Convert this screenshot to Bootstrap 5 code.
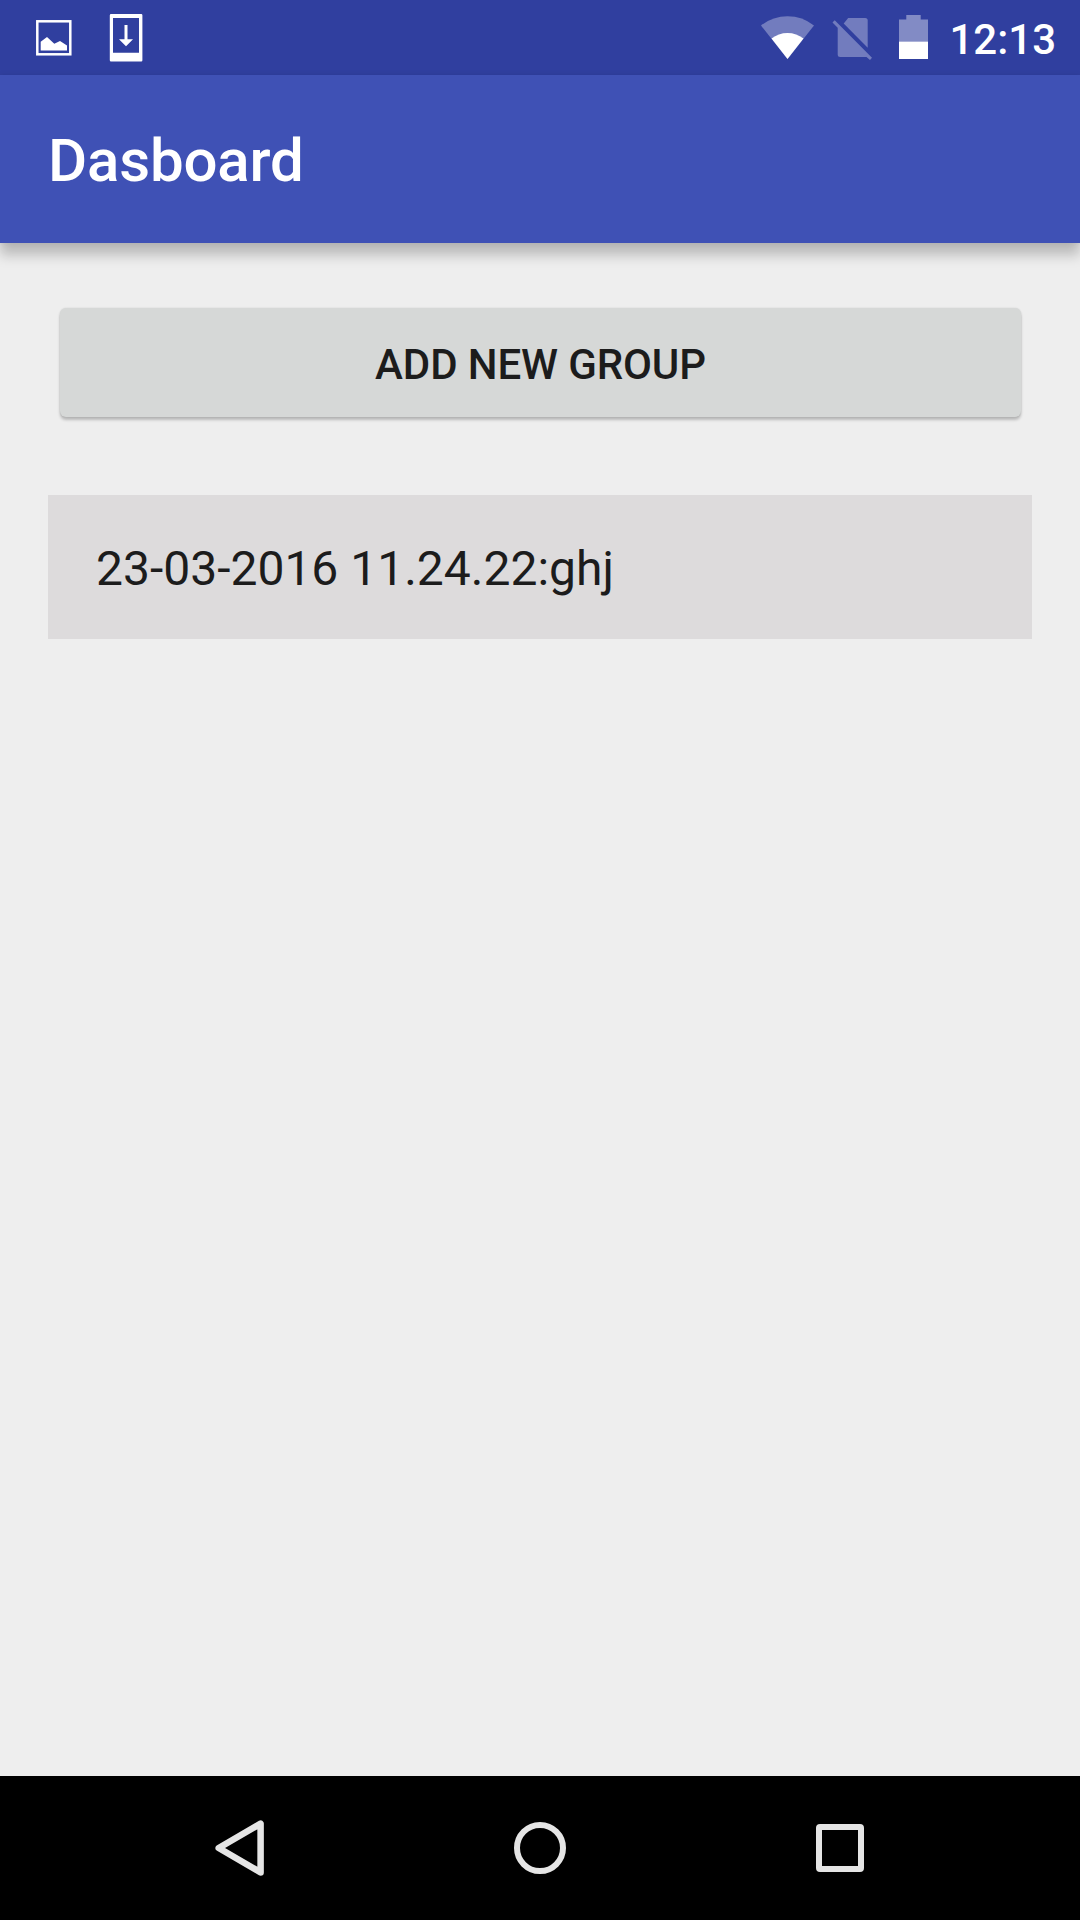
<!DOCTYPE html>
<html lang="en">
<head>
<meta charset="utf-8">
<meta name="viewport" content="width=device-width, initial-scale=1">
<title>Dasboard</title>
<link href="https://cdn.jsdelivr.net/npm/bootstrap@5.3.0/dist/css/bootstrap.min.css" rel="stylesheet">
<style>
  body { font-family: Roboto, "Noto Sans", sans-serif; background: #eee; color: #1c1c1c; }
  svg { display: block; flex: none; }
  .status-bar { height: 75px; background: #303f9f; padding: 0 24px 0 30px; }
  .status-left { gap: 24px; }
  .status-right { gap: 12px; }
  .clock { font-size: 42px; line-height: 48px; font-weight: 500; margin-left: -9px; padding-top: 5px; }
  .app-bar { height: 168px; padding: 0 48px; background: #3f51b5; box-shadow: 0 12px 12px 0 rgba(0,0,0,.22), 0 0 6px rgba(0,0,0,.08); }
  .app-title { font-size: 60px; line-height: 70px; font-weight: 500; padding-top: 4px; letter-spacing: -.17px; }
  .page-body { padding: 65px 48px 0; }
  .btn-group-add { height: 109px; margin: 0 11px 78px 12px; padding: 4px 0 0; border: 0; border-radius: 6px; background: #d6d8d7; color: #1c1c1c; font-size: 42px; line-height: 50px; font-weight: 500; letter-spacing: -.12px; box-shadow: 0 3px 3px rgba(0,0,0,.22), 0 0 2px rgba(0,0,0,.12); }
  .group-item { height: 144px; padding: 4px 48px 0; border: 0; background: #dddbdc; color: #1c1c1c; font-size: 48px; line-height: 56px; }
  .nav-keys { height: 144px; background: #000; padding: 0 168px; }
</style>
<script src="https://cdn.jsdelivr.net/npm/bootstrap@5.3.0/dist/js/bootstrap.bundle.min.js"></script>
</head>
<body class="d-flex flex-column vh-100 overflow-hidden">
<header class="flex-shrink-0 text-white">
  <div class="status-bar d-flex justify-content-between align-items-center">
    <div class="status-left d-flex">
      <svg width="48" height="75" viewBox="30 0 48 75" aria-hidden="true">
        <rect x="37.3" y="21.3" width="33" height="33" fill="none" stroke="#fff" stroke-width="2.5"/>
        <path d="M40.7 41.7 47 37l7.3 6.7L60 41l7 4.5v5H40.7z" fill="#fff"/>
      </svg>
      <svg width="48" height="75" viewBox="102 0 48 75" aria-hidden="true">
        <path fill="#fff" fill-rule="evenodd" d="M111 14h30.200q1.200 0 1.200 1.200v45q0 1.200-1.200 1.200H111q-1.200 0-1.200-1.200v-45q0-1.200 1.200-1.200zM113 18v34.700h26V18z"/>
        <path fill="#fff" d="M124.500 25h3v14.300h5.500l-7 7-7-7h5.500z"/>
      </svg>
    </div>
    <div class="status-right d-flex align-items-center">
      <svg width="54" height="75" viewBox="760 0 54 75" aria-hidden="true">
        <path fill="#fff" fill-opacity=".32" d="M787.500 59 761 25.600Q772.500 16.300 787.500 16.300T814 25.600z"/>
        <path fill="#fff" d="M787.500 59 771.500 38.600Q778.500 33 787.500 33T803.500 38.600z"/>
      </svg>
      <svg width="54" height="75" viewBox="826 0 54 75" aria-hidden="true">
        <g fill="#fff" fill-opacity=".32">
          <path d="m834.700 20.300-2.200 2.200 5.200 5.200V54.500q0 2.500 2.500 2.500H866.500l3.500 3 2-2.300z"/>
          <path d="m843.700 23.500 4.500-5.500H865.200q2.500 0 2.500 2.500v27.200z"/>
        </g>
      </svg>
      <svg width="54" height="75" viewBox="892 0 54 75" aria-hidden="true">
        <path fill="#fff" fill-opacity=".4" d="M899 41.500V19.500h7.300v-4.500h14.400v4.500h7.300v22z"/>
        <path fill="#fff" d="M899 41.500h29V59h-29z"/>
      </svg>
      <span class="clock">12:13</span>
    </div>
  </div>
  <nav class="app-bar d-flex align-items-center">
    <h1 class="app-title m-0">Dasboard</h1>
  </nav>
</header>
<main class="page-body flex-grow-1 d-flex flex-column">
  <button type="button" class="btn btn-group-add">ADD NEW GROUP</button>
  <ul class="list-group list-group-flush">
    <li class="list-group-item group-item d-flex align-items-center">23-03-2016 11.24.22:ghj</li>
  </ul>
</main>
<footer class="nav-keys flex-shrink-0 d-flex justify-content-between align-items-center">
  <svg width="144" height="144" viewBox="168 1776 144 144" fill="none" stroke="#e5e5e5" stroke-width="6.500" stroke-linejoin="round" role="img" aria-label="Back">
    <path d="M260.600 1823.600v48.800L218.700 1848z"/>
  </svg>
  <svg width="144" height="144" viewBox="468 1776 144 144" fill="none" stroke="#e5e5e5" stroke-width="6" role="img" aria-label="Home">
    <circle cx="540" cy="1848" r="23"/>
  </svg>
  <svg width="144" height="144" viewBox="768 1776 144 144" role="img" aria-label="Recent apps">
    <path fill="#e5e5e5" fill-rule="evenodd" d="M820 1824h40q4 0 4 4v40q0 4-4 4h-40q-4 0-4-4v-40q0-4 4-4zM822 1830v36h36v-36z"/>
  </svg>
</footer>
</body>
</html>
